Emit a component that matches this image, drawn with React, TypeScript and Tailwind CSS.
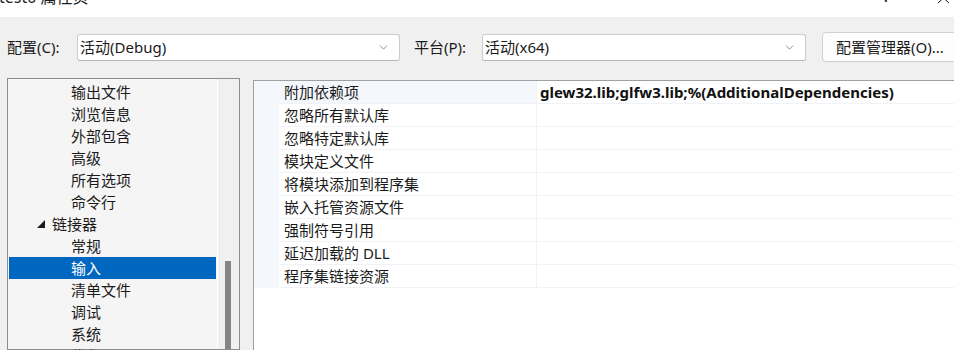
import { ChevronDown } from "lucide-react";

const font = { fontFamily: '"Noto Sans", "Noto Sans CJK SC", sans-serif' };

const treeItems = [
  { label: "输出文件", level: 2 },
  { label: "浏览信息", level: 2 },
  { label: "外部包含", level: 2 },
  { label: "高级", level: 2 },
  { label: "所有选项", level: 2 },
  { label: "命令行", level: 2 },
  { label: "链接器", level: 1 },
  { label: "常规", level: 2 },
  { label: "输入", level: 2, selected: true },
  { label: "清单文件", level: 2 },
  { label: "调试", level: 2 },
  { label: "系统", level: 2 },
  { label: "优化", level: 2 },
];

const props = [
  { name: "附加依赖项", value: "glew32.lib;glfw3.lib;%(AdditionalDependencies)" },
  { name: "忽略所有默认库", value: "" },
  { name: "忽略特定默认库", value: "" },
  { name: "模块定义文件", value: "" },
  { name: "将模块添加到程序集", value: "" },
  { name: "嵌入托管资源文件", value: "" },
  { name: "强制符号引用", value: "" },
  { name: "延迟加载的 DLL", value: "" },
  { name: "程序集链接资源", value: "" },
];

const Dropdown = ({ text, width }: { text: string; width: string }) => (
  <div
    className={`${width} shrink-0 h-[27px] flex items-center justify-between bg-white border border-[#cccccc] border-b-[#b5b5b5] rounded-[3px] pl-[2px] pr-[9px]`}
  >
    <span className="text-[15px] text-[#1b1b1b] leading-none">{text}</span>
    <ChevronDown size={13} strokeWidth={1.3} className="text-[#5f5f5f]" />
  </div>
);

export default function App() {
  return (
    <div
      className="w-[954px] h-[350px] overflow-hidden bg-[#f0f0f0] flex flex-col text-[#1b1b1b]"
      style={font}
    >
      {/* title bar */}
      <div className="h-[17px] bg-white relative overflow-hidden flex shrink-0">
        <span className="text-[16px] leading-none mt-[-11px] ml-[-1px]">test0 属性页</span>
        <span className="absolute left-[883px] top-[-12px] text-[16px] leading-none">?</span>
        <svg className="absolute left-[937px] top-[-8px]" width="14" height="12" viewBox="0 0 14 12">
          <path d="M1 1 L12 11 M12 1 L1 11" stroke="#1b1b1b" strokeWidth="1" fill="none" />
        </svg>
      </div>

      {/* configuration row */}
      <div className="mt-[15px] h-[30px] flex items-center shrink-0">
        <span className="ml-[7px] w-[70px] shrink-0 text-[15px]">配置(C):</span>
        <Dropdown text="活动(Debug)" width="w-[323px]" />
        <span className="ml-[14px] w-[68px] shrink-0 text-[15px]">平台(P):</span>
        <Dropdown text="活动(x64)" width="w-[324px]" />
        <div className="ml-[16px] h-[30px] w-[150px] shrink-0 flex items-center bg-[#fdfdfd] border border-[#d0d0d0] rounded-[4px] pl-[13px] text-[15px]">
          配置管理器(O)...
        </div>
      </div>

      {/* panels */}
      <div className="flex flex-1 mt-[16px] min-h-0">
        {/* tree */}
        <div className="ml-[7px] w-[233px] shrink-0 border border-[#8c8c8c] bg-[#f5f5f5] flex">
          <div className="w-[209px] shrink-0 pt-[2px] flex flex-col">
            {treeItems.map((it) => (
              <div
                key={it.label}
                className={`h-[22px] shrink-0 flex items-center text-[15px] ${
                  it.selected ? "bg-[#0067c0] text-white mx-[1px]" : ""
                } ${it.level === 2 ? (it.selected ? "pl-[62px]" : "pl-[63px]") : "pl-[29px]"}`}
              >
                {it.level === 1 && (
                  <svg width="8" height="8" viewBox="0 0 8 8" className="shrink-0 mr-[7px]">
                    <path d="M8 0 L8 8 L0 8 Z" fill="#1b1b1b" />
                  </svg>
                )}
                <span className="shrink-0">{it.label}</span>
              </div>
            ))}
          </div>
          <div className="flex-1 bg-[#f0f0f0] border-l border-[#ffffff] pt-[182px] pl-[7px]">
            <div className="w-[6px] h-full bg-[#858585]" />
          </div>
        </div>

        {/* property grid */}
        <div className="ml-[13px] mt-[2px] flex-1 border-l border-t border-[#a0a0a0] bg-white">
          <div className="flex flex-col">
            {props.map((p, i) => (
              <div key={p.name} className="h-[23px] flex">
                <div className="w-[25px] shrink-0 bg-[#f4f7fc]" />
                <div
                  className={`w-[258px] shrink-0 flex items-center pl-[5px] text-[15px] border-b border-r border-[#f0f2f5] ${
                    i === 0 ? "bg-[#f4f7fc]" : ""
                  }`}
                >
                  {p.name}
                </div>
                <div className="flex-1 flex items-center pl-[3px] text-[15px] font-bold border-b border-[#f0f2f5] text-[#111] whitespace-nowrap">
                  {p.value}
                </div>
              </div>
            ))}
          </div>
        </div>
      </div>
    </div>
  );
}
